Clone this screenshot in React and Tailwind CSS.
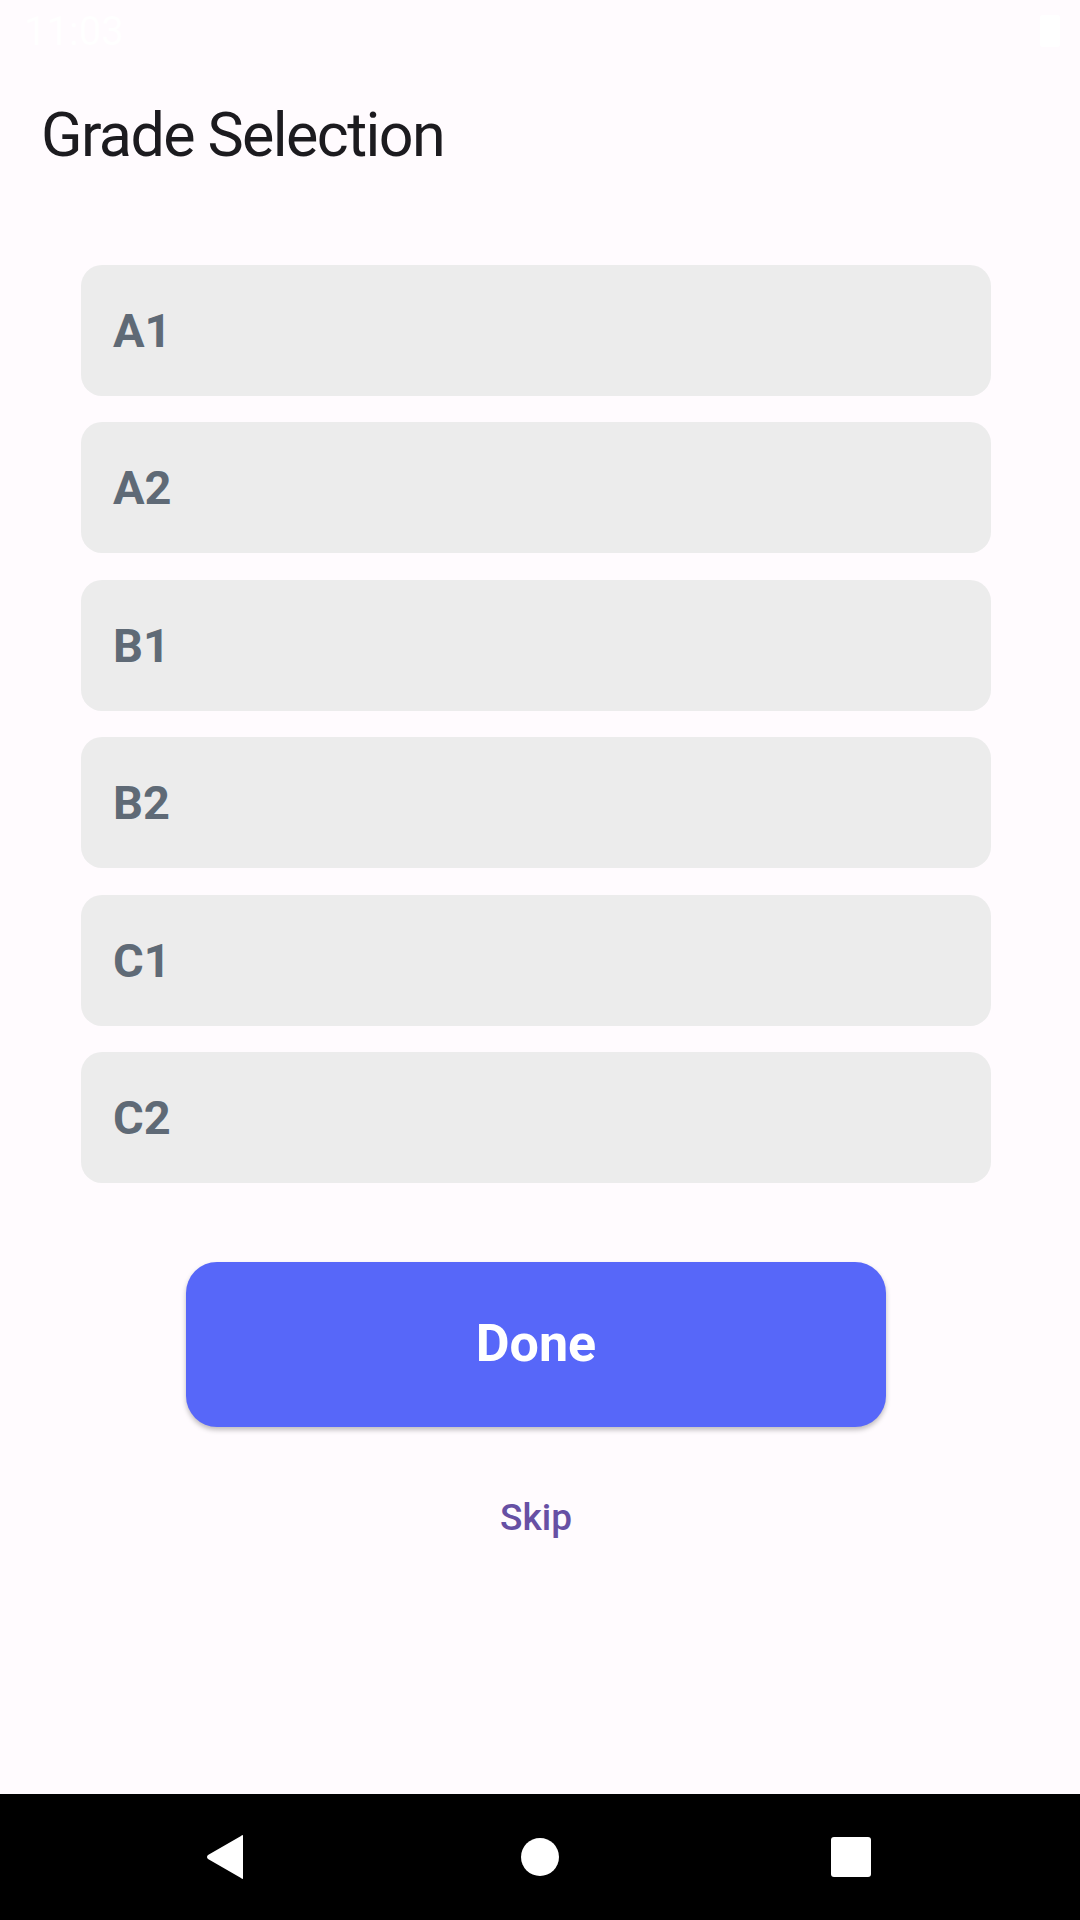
import React from "react";

const grades = ["A1", "A2", "B1", "B2", "C1", "C2"];

export default function App() {
  return (
    <div
      className="w-[1080px] h-[1920px] bg-[#fffbfe] flex flex-col"
      style={{ fontFamily: "Roboto, 'Noto Sans', sans-serif" }}
    >
      {/* status bar */}
      <div className="h-[63px] flex items-start justify-between px-[24px] pt-[12px]">
        <span className="text-[40px] leading-[40px] text-white">11:03</span>
        <div className="mt-[3px] mr-[-4px] w-[20px] h-[32px] rounded-[3px] bg-white" />
      </div>

      {/* title */}
      <div className="mt-[42px] pl-[41px] text-[61px] leading-[61px] tracking-[-1.6px] text-[#1c1b1f]">
        Grade Selection
      </div>

      {/* grade list */}
      <div className="mt-[99px] ml-[81px] w-[910px] flex flex-col gap-[26.4px]">
        {grades.map((g) => (
          <div
            key={g}
            className="h-[131px] rounded-[21px] bg-[#ececec] flex items-center pl-[32px] cursor-pointer"
          >
            <span className="text-[47px] leading-[47px] font-bold text-[#5f6a76]">{g}</span>
          </div>
        ))}
      </div>

      {/* done */}
      <button className="mt-[79px] ml-[186px] w-[700px] h-[165px] rounded-[31px] bg-[#5767f9] text-white text-[52px] font-bold shadow-[0_3px_5px_rgba(0,0,0,0.25)]">
        Done
      </button>

      <div className="mt-[72px] ml-[186px] w-[700px] text-center text-[37px] leading-[37px] font-medium text-[#6750a4]">
        Skip
      </div>

      {/* nav bar */}
      <div className="mt-auto h-[126px] bg-black flex items-center">
        <svg width="1080" height="126" viewBox="0 0 1080 126">
          <path
            d="M243 42 L243 84 Q243 86 241 84 L208 65 Q206 63 208 61 L241 42 Q243 40 243 42 Z"
            fill="white"
          />
          <circle cx="540" cy="63" r="19" fill="white" />
          <rect x="831" y="43" width="40" height="40" rx="3" fill="white" />
        </svg>
      </div>
    </div>
  );
}
